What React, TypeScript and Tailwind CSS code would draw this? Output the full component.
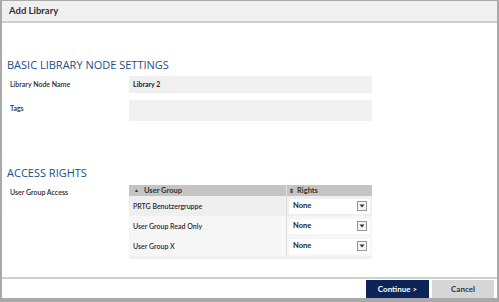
import React from "react";

const font = { fontFamily: 'Lato, "Open Sans", sans-serif' };
const headFont = { fontFamily: '"Open Sans", "Noto Sans", sans-serif' };

function Select() {
  return (
    <div className="flex items-center justify-between bg-white h-[15px] w-[81px] pl-[4px] pr-[3px]">
      <span className="text-[7.5px] font-bold text-[#222]">None</span>
      <div className="w-[10px] h-[10px] border border-[#999] bg-[#f4f4f4] flex items-center justify-center">
        <svg width="6" height="4" viewBox="0 0 6 4"><path d="M0.5 0.5 L5.5 0.5 L3 3.5 Z" fill="#333" /></svg>
      </div>
    </div>
  );
}

export default function App() {
  const rows = ["PRTG Benutzergruppe", "User Group Read Only", "User Group X"];
  return (
    <div style={font} className="w-[499px] h-[302px] bg-[#a9a9a9] pl-[2px] pt-[1px] pb-[4px] pr-[2px]">
      <div className="w-full h-full bg-white flex flex-col">
        <div className="h-[22px] bg-[#f0f0f0] border-b-2 border-[#cfcfcf] flex items-center pl-[7px]">
          <span className="text-[9.5px] font-bold text-[#333]">Add Library</span>
        </div>
        <div className="flex-1 pl-[5px]">
          <div style={headFont} className="mt-[36px] text-[11px] text-[#1d4d8a] leading-none">BASIC LIBRARY NODE SETTINGS</div>
          <div className="mt-[6px] flex">
            <div className="w-[122px] pl-[3px] pt-[3px] text-[7px] font-semibold text-[#2a2a2a]">Library Node Name</div>
            <div className="w-[243px] h-[17px] bg-[#f0f0f0] flex items-center pl-[4px] text-[7px] font-bold text-[#222]">Library 2</div>
          </div>
          <div className="mt-[7px] flex">
            <div className="w-[122px] pl-[3px] pt-[3px] text-[7px] font-semibold text-[#2a2a2a]">Tags</div>
            <div className="w-[243px] h-[21px] bg-[#f0f0f0]"></div>
          </div>
          <div style={headFont} className="mt-[46px] text-[11px] text-[#1d4d8a] leading-none">ACCESS RIGHTS</div>
          <div className="mt-[7px] flex">
            <div className="w-[122px] pl-[3px] pt-[2px] text-[7px] font-semibold text-[#2a2a2a]">User Group Access</div>
            <div className="w-[243px] bg-[#f0f0f0] pb-[3px]">
              <div className="flex h-[11px] bg-[#c4c4c4] text-[7.5px] font-bold text-[#333] leading-none">
                <div className="w-[157px] flex items-center pl-[5px] gap-[5px]">
                  <span className="text-[5px]">▲</span>User Group
                </div>
                <div className="flex-1 border-l border-[#e0e0e0] flex items-center pl-[2px] gap-[3px]">
                  <span className="text-[6px]">⇕</span>Rights
                </div>
              </div>
              {rows.map((r, i) => (
                <div key={r} className={`flex h-[20px] ${i === 0 ? "bg-[#efefef]" : "bg-[#f6f6f6]"}`}>
                  <div className="w-[157px] flex items-center pl-[4px] text-[7px] font-semibold text-[#2a2a2a]">{r}</div>
                  <div className="flex-1 border-l border-[#e0e0e0] flex items-center pl-[2px]">
                    <Select />
                  </div>
                </div>
              ))}
            </div>
          </div>
        </div>
        <div className="h-[21px] border-t-2 border-[#cfcfcf] flex items-center justify-end gap-[3px] pr-[3px]">
          <button className="w-[63px] h-[18px] bg-[#0b2559] text-white text-[8px] font-bold">Continue &gt;</button>
          <button className="w-[62px] h-[18px] bg-[#d6d6d6] text-[#333] text-[8px] font-bold">Cancel</button>
        </div>
      </div>
    </div>
  );
}
